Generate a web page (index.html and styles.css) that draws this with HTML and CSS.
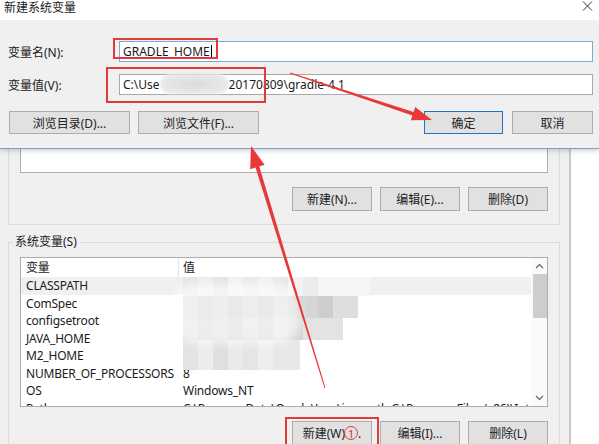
FILE: index.html
```html
<!DOCTYPE html>
<html lang="zh-CN">
<head>
<meta charset="utf-8">
<title>新建系统变量</title>
<link rel="stylesheet" href="styles.css">
</head>
<body>
<div class="screen">
  <div class="env">
    <fieldset class="group g1">
      <div class="listbox"></div>
      <div class="btnrow">
        <button class="btn">新建(N)...</button>
        <button class="btn">编辑(E)...</button>
        <button class="btn">删除(D)</button>
      </div>
    </fieldset>
    <fieldset class="group g2">
      <legend>系统变量(S)</legend>
      <div class="listview">
        <div class="lv-main">
          <div class="lv-head"><span class="c1">变量</span><span class="c2">值</span></div>
          <div class="lv-row sel"><span class="c1">CLASSPATH</span><span class="c2"></span></div>
          <div class="lv-row"><span class="c1">ComSpec</span><span class="c2"></span></div>
          <div class="lv-row"><span class="c1">configsetroot</span><span class="c2"></span></div>
          <div class="lv-row"><span class="c1">JAVA_HOME</span><span class="c2"></span></div>
          <div class="lv-row"><span class="c1">M2_HOME</span><span class="c2"></span></div>
          <div class="lv-row"><span class="c1">NUMBER_OF_PROCESSORS</span><span class="c2">8</span></div>
          <div class="lv-row"><span class="c1">OS</span><span class="c2">Windows_NT</span></div>
          <div class="lv-row"><span class="c1">Path</span><span class="c2">C:\ProgramData\Oracle\Java\javapath;C:\Program Files (x86)\Intel\iCLS Client\;</span></div>
        </div>
        <div class="vscroll">
          <div class="sb-arrow">
            <svg width="9" height="6" viewBox="0 0 9 6"><polyline points="1,5 4.5,1.5 8,5" fill="none" stroke="#606060" stroke-width="1.2"/></svg>
          </div>
          <div class="sb-thumb"></div>
          <div class="sb-space"></div>
          <div class="sb-arrow">
            <svg width="9" height="6" viewBox="0 0 9 6"><polyline points="1,1 4.5,4.5 8,1" fill="none" stroke="#606060" stroke-width="1.2"/></svg>
          </div>
        </div>
        <div class="mosaic">
          <div class="mz mz-a"></div>
          <div class="mz mz-b"></div>
          <div class="mz mz-c"></div>
          <div class="mz mz-d"></div>
        </div>
        <div class="glow"></div>
      </div>
      <div class="btnrow">
        <button class="btn">新建(W)<span class="circ">1</span>.</button>
        <button class="btn">编辑(I)...</button>
        <button class="btn">删除(L)</button>
      </div>
    </fieldset>
  </div>

  <div class="dialog">
    <div class="titlebar">
      <span class="title">新建系统变量</span>
      <svg class="close" width="11" height="10" viewBox="0 0 11 10"><path d="M1 0.5 L10 9.5 M10 0.5 L1 9.5" stroke="#333" stroke-width="1"/></svg>
    </div>
    <div class="dlg-body">
      <div class="field">
        <label class="flabel">变量名(N):</label>
        <div class="tbox focus">GRADLE_HOME<span class="caret"></span></div>
      </div>
      <div class="field f2">
        <label class="flabel">变量值(V):</label>
        <div class="tbox">C:\Use<span class="smudge"></span>20170809\gradle-4.1</div>
      </div>
      <div class="dlg-btns">
        <div class="bgroup">
          <button class="btn wide">浏览目录(D)...</button>
          <button class="btn wide">浏览文件(F)...</button>
        </div>
        <div class="bgroup bg-right">
          <button class="btn ok">确定</button>
          <button class="btn cancel">取消</button>
        </div>
      </div>
    </div>
  </div>

  <svg class="marks" width="599" height="444" viewBox="0 0 599 444">
    <rect x="114" y="39" width="103" height="19" fill="none" stroke="#e23a3a" stroke-width="2"/>
    <rect x="107" y="68" width="158" height="34" fill="none" stroke="#e23a3a" stroke-width="2"/>
    <rect x="286" y="418" width="92" height="40" fill="none" stroke="#e23a3a" stroke-width="2"/>
    <polygon fill="#e8383a" points="290.2,72.5 413.6,112.0 415.2,107.1 432,120 410.8,120.3 412.4,115.4 289.8,73.5"/>
    <polygon fill="#e8383a" points="325.5,387.9 259.3,166.4 264.6,164.8 251,146 250.2,169.2 255.5,167.6 324.5,388.1"/>
  </svg>
</div>
</body>
</html>
```

FILE: styles.css
```css
* { box-sizing: border-box; }

html, body {
  margin: 0;
  padding: 0;
  background: #ffffff;
}

body {
  font-family: "Noto Sans", "Noto Sans CJK SC", sans-serif;
  font-size: 12px;
  color: #1a1a1a;
}

.screen {
  position: relative;
  width: 599px;
  height: 444px;
  overflow: hidden;
  background: #ffffff;
}

/* ---------- background window ---------- */
.env {
  width: 571px;
  height: 444px;
  padding-top: 20px;
  background: #f0f0f0;
  border-right: 2px solid #c9c9c9;
  overflow: hidden;
}

.group {
  margin: 0 9px 0 8px;
  padding: 0;
  border: 1px solid #dcdcdc;
  min-width: 0;
}

.g1 {
  padding: 19px 11px 13px 11px;
}

.g2 {
  margin-top: 9px;
  padding: 7px 11px 13px 11px;
}

.g2 legend {
  margin-left: -8px;
  padding: 0 3px;
  line-height: 16px;
  font-size: 12px;
  color: #1a1a1a;
}

.listbox {
  height: 133px;
  background: #ffffff;
  border: 1px solid #adadad;
}

.btnrow {
  display: flex;
  justify-content: flex-end;
  gap: 8px;
  margin-top: 14px;
}

.btn {
  width: 80px;
  height: 24px;
  padding: 0;
  margin: 0;
  background: #e1e1e1;
  border: 1px solid #adadad;
  font-family: "Noto Sans", "Noto Sans CJK SC", sans-serif;
  font-size: 12px;
  color: #222;
  display: flex;
  align-items: center;
  justify-content: center;
}

.circ {
  display: inline-flex;
  align-items: center;
  justify-content: center;
  width: 14px;
  height: 14px;
  border: 1px solid #e23a3a;
  border-radius: 50%;
  color: #d23030;
  font-size: 11px;
  line-height: 1;
  margin-left: -1px;
}

/* ---------- list view ---------- */
.listview {
  position: relative;
  display: flex;
  height: 150px;
  background: #ffffff;
  border: 1px solid #adadad;
  overflow: hidden;
}

.lv-main {
  width: 510px;
  overflow: hidden;
  letter-spacing: -0.2px;
}

.lv-head,
.lv-row {
  display: flex;
  white-space: nowrap;
}

.lv-head {
  height: 19px;
  line-height: 19px;
}

.lv-head .c1 {
  border-right: 1px solid #e5e5e5;
}

.lv-row {
  height: 17.5px;
  line-height: 17.5px;
}

.lv-row.sel {
  background: #f0f0f0;
}

.c1 {
  flex: 0 0 158px;
  padding-left: 5px;
}

.c2 {
  padding-left: 4px;
}

.vscroll {
  width: 16px;
  display: flex;
  flex-direction: column;
  background: #fafafa;
}

.sb-arrow {
  height: 16px;
  display: flex;
  align-items: center;
  justify-content: center;
}

.sb-thumb {
  height: 44px;
  margin: 0 0 0 2px;
  background: #cdcdcd;
}

.sb-space {
  flex: 1;
}

/* pixelated redaction over the values */
.mosaic {
  position: absolute;
  left: 162px;
  top: 19px;
  display: flex;
  flex-direction: column;
  filter: blur(0.7px);
}

.mz-a {
  width: 187px;
  height: 19px;
  background: linear-gradient(90deg, #e6e6e6 0 15px, #eeeeee 15px 30px, #e4e4e4 30px 45px, #f1f1f1 45px 60px, #eaeaea 60px 75px, #f0f0f0 75px 90px, #e8e8e8 90px 105px, #f3f3f3 105px 120px, #ececec 120px 135px, #f6f6f6 135px 187px);
}

.mz-b {
  width: 175px;
  height: 22px;
  background: linear-gradient(90deg, #d8d8d8 0 15px, #cccccc 15px 30px, #d4d4d4 30px 45px, #c8c8c8 45px 60px, #d2d2d2 60px 75px, #cbcbcb 75px 90px, #d6d6d6 90px 105px, #cfcfcf 105px 120px, #d5d5d5 120px 135px, #cdcdcd 135px 150px, #dedede 150px 175px);
}

.mz-c {
  width: 160px;
  height: 22px;
  background: linear-gradient(90deg, #dddddd 0 15px, #d2d2d2 15px 30px, #d9d9d9 30px 45px, #cfcfcf 45px 60px, #dbdbdb 60px 75px, #d2d2d2 75px 90px, #dfdfdf 90px 105px, #d6d6d6 105px 120px, #e3e3e3 120px 160px);
}

.mz-d {
  width: 117px;
  height: 30px;
  background: linear-gradient(90deg, #e3e3e3 0 15px, #ececec 15px 30px, #dfdfdf 30px 45px, #eaeaea 45px 60px, #e5e5e5 60px 75px, #eeeeee 75px 90px, #e8e8e8 90px 117px);
}

.glow {
  position: absolute;
  left: 150px;
  top: 26px;
  width: 130px;
  height: 60px;
  border-radius: 24px;
  background: rgba(255, 255, 255, 0.6);
  filter: blur(4px);
}

/* ---------- foreground dialog ---------- */
.dialog {
  position: absolute;
  left: 0;
  top: 0;
  width: 599px;
  box-shadow: 0 2px 5px rgba(0, 0, 0, 0.18);
}

.titlebar {
  position: relative;
  height: 20px;
  background: #ffffff;
  padding-left: 4px;
}

.title {
  display: block;
  padding-top: 1px;
  line-height: 14px;
  font-size: 12px;
  color: #1a1a1a;
}

.close {
  position: absolute;
  right: 6px;
  top: 1px;
}

.dlg-body {
  background: #f0f0f0;
  padding: 21px 6px 14px 8px;
  border-bottom: 1px solid #7f9fc6;
}

.field {
  display: flex;
  align-items: center;
  height: 21px;
}

.f2 {
  margin-top: 12px;
}

.flabel {
  flex: 0 0 111px;
  color: #1a1a1a;
}

.tbox {
  flex: 1;
  height: 21px;
  display: flex;
  align-items: center;
  padding: 0 3px;
  background: #ffffff;
  border: 1px solid #a9a9a9;
  white-space: nowrap;
  color: #1a1a1a;
}

.tbox.focus {
  border-color: #7aaad8;
}

.caret {
  display: inline-block;
  width: 1px;
  height: 14px;
  margin-left: 1px;
  background: #000;
}

.smudge {
  display: inline-block;
  flex: 0 0 69px;
  height: 20px;
  margin-top: -2px;
  border-radius: 10px;
  background: radial-gradient(ellipse at center, #dcdcdc 0%, #e6e6e6 55%, #f2f2f2 100%);
  filter: blur(1.2px);
}

.dlg-btns {
  display: flex;
  justify-content: space-between;
  margin-top: 16px;
}

.bgroup {
  display: flex;
  gap: 8px;
  margin-left: 1px;
}

.bg-right {
  gap: 9px;
}

.btn.wide {
  width: 121px;
  height: 23px;
}

.btn.ok {
  width: 79px;
  height: 23px;
  border-color: #1f73c4;
}

.btn.cancel {
  width: 81px;
  height: 23px;
}

/* ---------- annotations ---------- */
.marks {
  position: absolute;
  left: 0;
  top: 0;
  pointer-events: none;
}
```
